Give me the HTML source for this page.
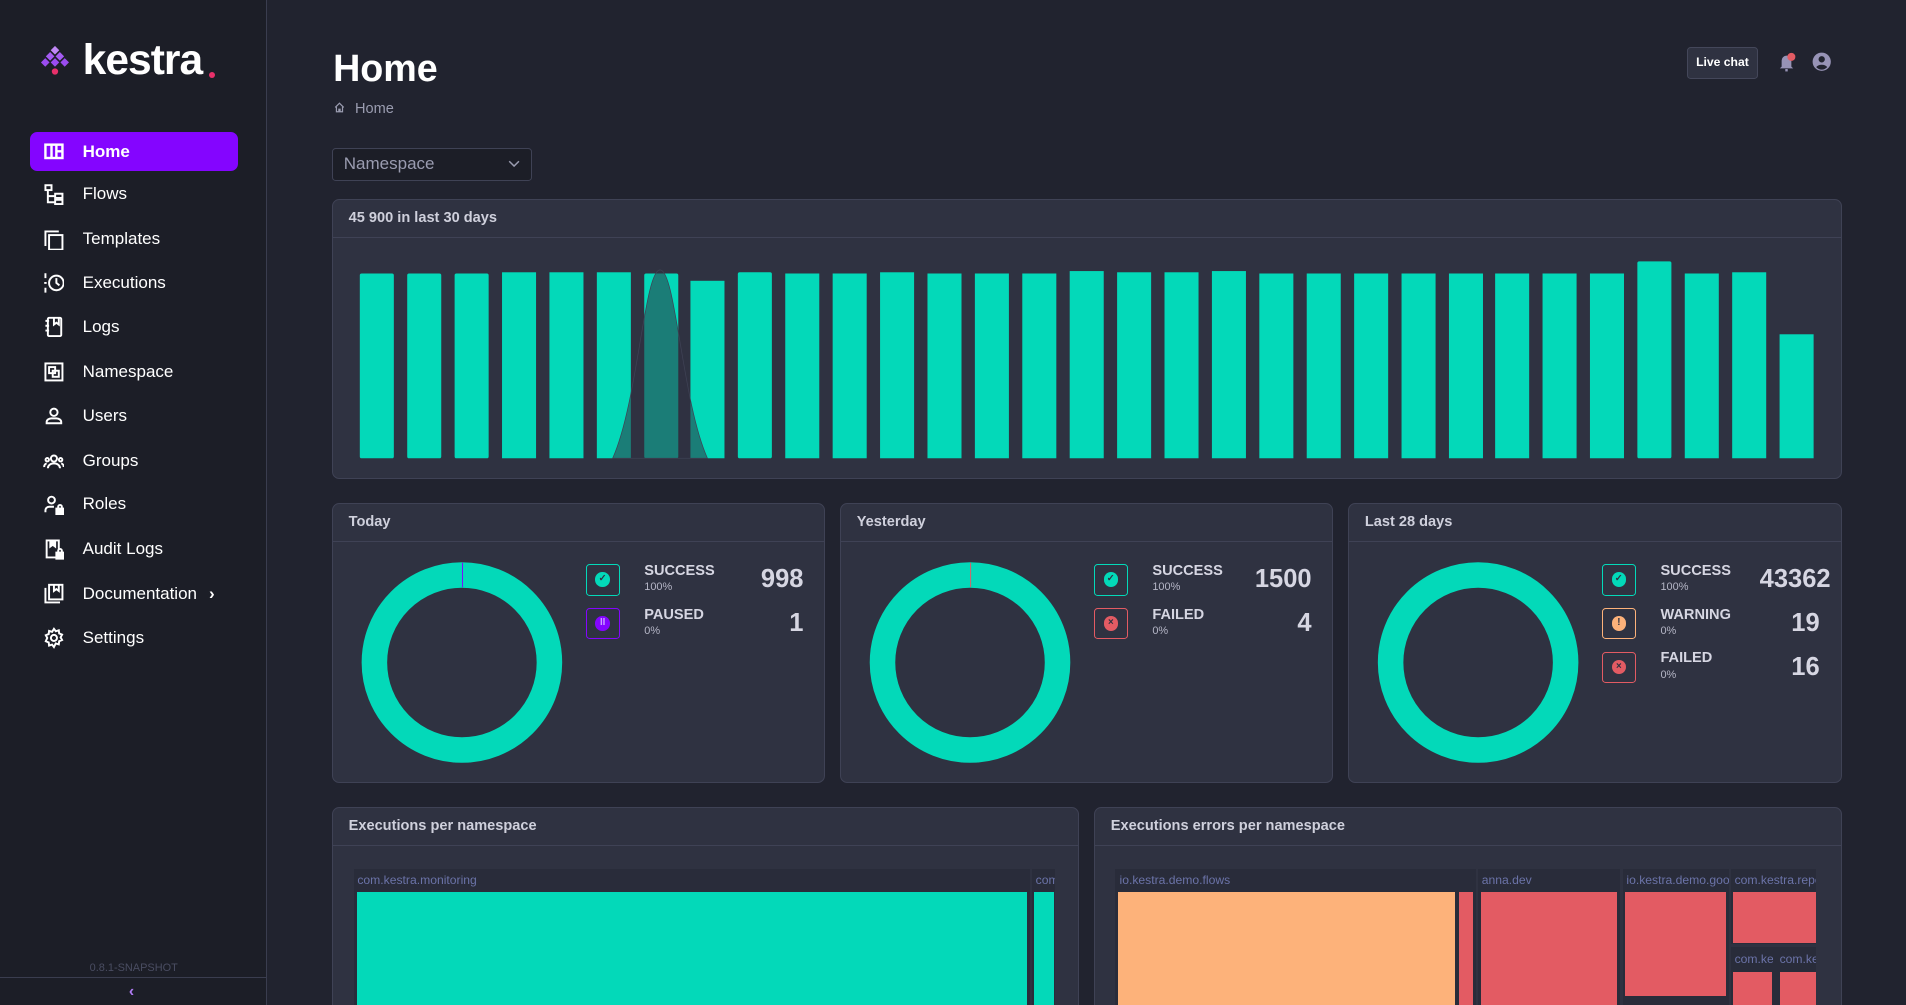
<!DOCTYPE html>
<html><head><meta charset="utf-8"><style>
html{zoom:1.21556;background:#21232f}
*{box-sizing:border-box;margin:0;padding:0}
body{width:1568px;height:827px;overflow:hidden;background:#21232f;font-family:"Liberation Sans",sans-serif;color:#fff}
#w{position:relative;width:1568px;height:827px;overflow:hidden}
.a{position:absolute}
.side{left:0;top:0;width:220px;height:827px;background:#1c1e27;border-right:1px solid #3a3d4f}
.nav{left:25px;width:171px;height:32px;font-size:14px;color:#fff;display:flex;align-items:center}
.nav svg{position:absolute;left:10px;width:18px;height:18px}
.nav span{position:absolute;left:43px}
.card{background:#2f3241;border:1px solid #3f4255;border-radius:6px}
.ch{height:31px;border-bottom:1px solid #3f4255;font-size:12px;font-weight:bold;color:#cfd0dc;padding:8px 0 0 13px}
.lg{width:28px;height:26px;border:1px solid;border-radius:3px}
.lg i{position:absolute;left:7px;top:6px;width:12px;height:12px;border-radius:50%;font-style:normal;font-size:8px;font-weight:bold;color:#2f3241;text-align:center;line-height:12px}
.lt{font-size:12px;font-weight:bold;color:#d6d6e2}
.lp{font-size:9px;color:#b5b6c6}
.num{font-size:21px;font-weight:bold;color:#d6d6e2;text-align:right;width:80px}
.tl{font-size:10px;color:#6b73a8}
</style></head><body><div id="w">
<div class="a side"></div>
<svg class="a" style="left:34px;top:38px" width="28" height="26" viewBox="0 0 28 26">
<rect x="9" y="1" width="5" height="5" fill="#c087f5" transform="rotate(45 11.5 3.5)"/>
<rect x="5" y="6" width="5" height="5" fill="#a45bf2" transform="rotate(45 7.5 8.5)"/>
<rect x="13" y="6" width="5" height="5" fill="#a45bf2" transform="rotate(45 15.5 8.5)"/>
<rect x="1" y="11" width="5" height="5" fill="#9b4cf0" transform="rotate(45 3.5 13.5)"/>
<rect x="9" y="11" width="5" height="5" fill="#9b4cf0" transform="rotate(45 11.5 13.5)"/>
<rect x="17" y="11" width="5" height="5" fill="#9b4cf0" transform="rotate(45 19.5 13.5)"/>
<circle cx="11.5" cy="21" r="2.6" fill="#e8306a"/></svg>
<div class="a" style="left:68px;top:30px;font-size:35px;font-weight:bold;letter-spacing:-0.8px;color:#fff">kestra</div>
<div class="a" style="left:172px;top:59px;width:5px;height:5px;border-radius:50%;background:#e8306a"></div>

<div class="a nav" style="top:109px;background:#8405ff;border-radius:6px;font-weight:bold"><svg viewBox="0 0 18 18" fill="none" stroke="#fff" stroke-width="2"><rect x="2" y="3" width="14" height="11"/><path d="M7 3v11M11 3v11M11 8.5h5"/></svg><span>Home</span></div>
<div class="a nav" style="top:144px"><svg viewBox="0 0 18 18" fill="none" stroke="#fff" stroke-width="1.6"><rect x="2" y="1" width="5" height="4"/><rect x="10" y="8" width="6" height="3.5"/><rect x="10" y="13" width="6" height="3.5"/><path d="M4 5v10h6M4 10h6"/></svg><span>Flows</span></div>
<div class="a nav" style="top:181px"><svg viewBox="0 0 18 18" fill="none" stroke="#fff" stroke-width="1.6"><rect x="5" y="5" width="11" height="12"/><path d="M2 14V2h11"/></svg><span>Templates</span></div>
<div class="a nav" style="top:217px"><svg viewBox="0 0 18 18" fill="none" stroke="#fff" stroke-width="1.6"><circle cx="11" cy="9" r="6"/><path d="M11 5v4l2.5 2M2 1v4M2 13v4M1 9h2"/></svg><span>Executions</span></div>
<div class="a nav" style="top:253px"><svg viewBox="0 0 18 18" fill="none" stroke="#fff" stroke-width="1.6"><rect x="4" y="1.5" width="11" height="15" rx="1"/><path d="M2 4h3M2 8h3M2 12h3M9 2v5l2-1.5 2 1.5V2" /></svg><span>Logs</span></div>
<div class="a nav" style="top:290px"><svg viewBox="0 0 18 18" fill="none" stroke="#fff" stroke-width="1.6"><rect x="2" y="2" width="14" height="14"/><rect x="5" y="5" width="5" height="5"/><rect x="8" y="8" width="5" height="5"/></svg><span>Namespace</span></div>
<div class="a nav" style="top:326px"><svg viewBox="0 0 18 18" fill="none" stroke="#fff" stroke-width="1.6"><circle cx="9" cy="6" r="3"/><path d="M3 15v-1a4 3 0 0 1 4-3h4a4 3 0 0 1 4 3v1z"/></svg><span>Users</span></div>
<div class="a nav" style="top:363px"><svg viewBox="0 0 18 18" fill="none" stroke="#fff" stroke-width="1.6"><circle cx="9" cy="7" r="2.5"/><circle cx="3.5" cy="8" r="1.4"/><circle cx="14.5" cy="8" r="1.4"/><path d="M4 15a5 4 0 0 1 10 0M1 14a3 3 0 0 1 2-3M17 14a3 3 0 0 0-2-3"/></svg><span>Groups</span></div>
<div class="a nav" style="top:399px"><svg viewBox="0 0 18 18" fill="none" stroke="#fff" stroke-width="1.6"><circle cx="7" cy="5" r="2.8"/><path d="M2 15v-1.5a3 3 0 0 1 3-3h4"/><rect x="11" y="12" width="6" height="5" fill="#fff"/><path d="M12.5 12v-1.5a1.5 1.5 0 0 1 3 0V12"/></svg><span>Roles</span></div>
<div class="a nav" style="top:436px"><svg viewBox="0 0 18 18" fill="none" stroke="#fff" stroke-width="1.6"><path d="M11 16H3V2h10v7"/><path d="M6 2v5l2-1.5 2 1.5V2" fill="#fff"/><rect x="11" y="12" width="6" height="5" fill="#fff"/><path d="M12.5 12v-1.5a1.5 1.5 0 0 1 3 0V12"/></svg><span>Audit Logs</span></div>
<div class="a nav" style="top:473px"><svg viewBox="0 0 18 18" fill="none" stroke="#fff" stroke-width="1.6"><rect x="5" y="1.5" width="11" height="12"/><path d="M2 4v12h12M9 1.5v5l2-1.5 2 1.5v-5" /></svg><span>Documentation</span><span style="left:147px;font-weight:bold">›</span></div>
<div class="a nav" style="top:509px"><svg viewBox="0 0 18 18" fill="none" stroke="#fff" stroke-width="1.6"><circle cx="9" cy="9" r="2.5"/><path d="M9 1.5l1.5 2 2.5-.8.3 2.6 2.4 1-1.2 2.2 1.2 2.2-2.4 1-.3 2.6-2.5-.8L9 16.5l-1.5-2-2.5.8-.3-2.6-2.4-1L3.5 9 2.3 6.8l2.4-1L5 3.2l2.5.8z"/></svg><span>Settings</span></div>

<div class="a" style="left:0;top:791px;width:220px;text-align:center;font-size:9px;color:#4a4d62">0.8.1-SNAPSHOT</div>
<div class="a" style="left:0;top:804px;width:220px;border-top:1px solid #3a3d4f"></div>
<div class="a" style="left:106px;top:809px;font-size:13px;color:#b07cf5;font-weight:bold">‹</div>

<div class="a" style="left:274px;top:39px;font-size:31px;font-weight:bold">Home</div>
<svg class="a" style="left:275px;top:84px" width="9" height="9" viewBox="0 0 9 9" fill="none" stroke="#9a9cb0" stroke-width="1"><path d="M1 4.5L4.5 1 8 4.5M2 4v4h2V6h1v2h2V4"/></svg>
<div class="a" style="left:292px;top:83px;font-size:12px;color:#9a9cb0">Home</div>
<div class="a" style="left:1388px;top:39px;width:58px;height:26px;background:#2f3241;border:1px solid #44475a;border-radius:3px;font-size:10px;font-weight:bold;text-align:center;line-height:24px">Live chat</div>
<svg class="a" style="left:1463px;top:43px" width="16" height="17" viewBox="0 0 16 17"><path d="M3 12V7a4 4 0 0 1 8 0v5l1.5 1.5h-11z" fill="#9793b6"/><rect x="6" y="14" width="2" height="2" fill="#9793b6"/><circle cx="11" cy="4" r="3.3" fill="#e35b63"/></svg>
<svg class="a" style="left:1491px;top:43px" width="16" height="16" viewBox="0 0 16 16"><circle cx="8" cy="8" r="7.5" fill="#9793b6"/><circle cx="8" cy="6" r="2.6" fill="#21232f"/><path d="M3.5 12.5a5 3.5 0 0 1 9 0a6 6 0 0 1-9 0z" fill="#21232f"/></svg>

<div class="a" style="left:273px;top:122px;width:165px;height:27px;background:#1c1e27;border:1px solid #3f4255;border-radius:3px;font-size:14px;color:#9a9cb0;padding:4px 0 0 9px">Namespace</div>
<svg class="a" style="left:418px;top:132px" width="10" height="6" viewBox="0 0 10 6" fill="none" stroke="#9a9cb0" stroke-width="1.2"><path d="M1 1l4 4 4-4"/></svg>

<div class="a card" style="left:273px;top:164px;width:1242px;height:230px"><div class="ch">45 900 in last 30 days</div></div>
<div class="a card" style="left:273px;top:414px;width:406px;height:230px"><div class="ch">Today</div></div>
<div class="a card" style="left:691px;top:414px;width:406px;height:230px"><div class="ch">Yesterday</div></div>
<div class="a card" style="left:1109px;top:414px;width:406px;height:230px"><div class="ch">Last 28 days</div></div>

<svg class="a" style="left:0;top:0" width="1568" height="827">
<g fill="#03d9b9">
<rect x="296" y="225" width="28" height="152" rx="1.5"/><rect x="335" y="225" width="28" height="152" rx="1.5"/><rect x="374" y="225" width="28" height="152" rx="1.5"/><rect x="413" y="224" width="28" height="153"/><rect x="452" y="224" width="28" height="153"/><rect x="491" y="224" width="28" height="153"/><rect x="530" y="225" width="28" height="152" rx="1.5"/><rect x="568" y="231" width="28" height="146"/><rect x="607" y="224" width="28" height="153" rx="1.5"/><rect x="646" y="225" width="28" height="152"/><rect x="685" y="225" width="28" height="152"/><rect x="724" y="224" width="28" height="153"/><rect x="763" y="225" width="28" height="152"/><rect x="802" y="225" width="28" height="152"/><rect x="841" y="225" width="28" height="152"/><rect x="880" y="223" width="28" height="154"/><rect x="919" y="224" width="28" height="153"/><rect x="958" y="224" width="28" height="153"/><rect x="997" y="223" width="28" height="154"/><rect x="1036" y="225" width="28" height="152"/><rect x="1075" y="225" width="28" height="152"/><rect x="1114" y="225" width="28" height="152"/><rect x="1153" y="225" width="28" height="152"/><rect x="1192" y="225" width="28" height="152"/><rect x="1230" y="225" width="28" height="152"/><rect x="1269" y="225" width="28" height="152"/><rect x="1308" y="225" width="28" height="152"/><rect x="1347" y="215" width="28" height="162" rx="1.5"/><rect x="1386" y="225" width="28" height="152"/><rect x="1425" y="224" width="28" height="153"/><rect x="1464" y="275" width="28" height="102"/>
</g>
<path d="M504 377C525 330 530 222 543 222C556 222 561 330 582 377Z" fill="#2f3241" fill-opacity="0.55" stroke="#3f4255" stroke-width="0.6"/>
<g fill="none" stroke="#03d9b9" stroke-width="21"><circle cx="380" cy="545" r="72"/><circle cx="798" cy="545" r="72"/><circle cx="1216" cy="545" r="72"/></g>
<line x1="380.5" y1="463" x2="380.5" y2="483" stroke="#8405ff" stroke-width="0.8"/>
<line x1="798.5" y1="463" x2="798.5" y2="483" stroke="#e35b63" stroke-width="0.8"/>
</svg>

<div class="a lg" style="left:482px;top:464px;border-color:#03d9b9"><i style="background:#03d9b9">✓</i></div>
<div class="a lt" style="left:530px;top:463px">SUCCESS</div><div class="a lp" style="left:530px;top:478px">100%</div>
<div class="a num" style="left:581px;top:465px">998</div>
<div class="a lg" style="left:482px;top:500px;border-color:#8405ff"><i style="background:#8405ff;color:#c9a0ff">II</i></div>
<div class="a lt" style="left:530px;top:499px">PAUSED</div><div class="a lp" style="left:530px;top:514px">0%</div>
<div class="a num" style="left:581px;top:501px">1</div>

<div class="a lg" style="left:900px;top:464px;border-color:#03d9b9"><i style="background:#03d9b9">✓</i></div>
<div class="a lt" style="left:948px;top:463px">SUCCESS</div><div class="a lp" style="left:948px;top:478px">100%</div>
<div class="a num" style="left:999px;top:465px">1500</div>
<div class="a lg" style="left:900px;top:500px;border-color:#e35b63"><i style="background:#e35b63">×</i></div>
<div class="a lt" style="left:948px;top:499px">FAILED</div><div class="a lp" style="left:948px;top:514px">0%</div>
<div class="a num" style="left:999px;top:501px">4</div>

<div class="a lg" style="left:1318px;top:464px;border-color:#03d9b9"><i style="background:#03d9b9">✓</i></div>
<div class="a lt" style="left:1366px;top:463px">SUCCESS</div><div class="a lp" style="left:1366px;top:478px">100%</div>
<div class="a num" style="left:1426px;top:465px">43362</div>
<div class="a lg" style="left:1318px;top:500px;border-color:#fdb27a"><i style="background:#fdb27a">!</i></div>
<div class="a lt" style="left:1366px;top:499px">WARNING</div><div class="a lp" style="left:1366px;top:514px">0%</div>
<div class="a num" style="left:1417px;top:501px">19</div>
<div class="a lg" style="left:1318px;top:536px;border-color:#e35b63"><i style="background:#e35b63">×</i></div>
<div class="a lt" style="left:1366px;top:535px">FAILED</div><div class="a lp" style="left:1366px;top:550px">0%</div>
<div class="a num" style="left:1417px;top:537px">16</div>

<div class="a card" style="left:273px;top:664px;width:615px;height:200px"><div class="ch">Executions per namespace</div></div>
<div class="a card" style="left:900px;top:664px;width:615px;height:200px"><div class="ch">Executions errors per namespace</div></div>

<div class="a" style="left:291px;top:715px;width:577px;height:120px;background:#292c3a"></div>
<div class="a" style="left:847px;top:715px;width:2px;height:120px;background:#2f3241"></div>
<div class="a tl" style="left:294px;top:718px">com.kestra.monitoring</div>
<div class="a tl" style="left:852px;top:718px;width:16px;overflow:hidden">com</div>
<div class="a" style="left:294px;top:734px;width:551px;height:100px;background:#03d9b9"></div>
<div class="a" style="left:851px;top:734px;width:16px;height:100px;background:#03d9b9"></div>

<div class="a" style="left:917px;top:715px;width:577px;height:120px;background:#292c3a"></div>
<div class="a tl" style="left:921px;top:718px">io.kestra.demo.flows</div>
<div class="a" style="left:920px;top:734px;width:277px;height:100px;background:#fdb27a"></div>
<div class="a" style="left:1200px;top:734px;width:12px;height:100px;background:#e35b63"></div>
<div class="a" style="left:1214px;top:715px;width:2px;height:120px;background:#2f3241"></div>
<div class="a tl" style="left:1219px;top:718px">anna.dev</div>
<div class="a" style="left:1218px;top:734px;width:112px;height:100px;background:#e35b63"></div>
<div class="a" style="left:1333px;top:715px;width:2px;height:120px;background:#2f3241"></div>
<div class="a tl" style="left:1338px;top:718px;width:84px;overflow:hidden;white-space:nowrap">io.kestra.demo.google</div>
<div class="a" style="left:1337px;top:734px;width:83px;height:85px;background:#e35b63"></div>
<div class="a" style="left:1422px;top:715px;width:2px;height:120px;background:#2f3241"></div>
<div class="a tl" style="left:1427px;top:718px;width:67px;overflow:hidden;white-space:nowrap">com.kestra.repo</div>
<div class="a" style="left:1426px;top:734px;width:68px;height:42px;background:#e35b63"></div>
<div class="a" style="left:1424px;top:777px;width:70px;height:2px;background:#2f3241"></div>
<div class="a tl" style="left:1427px;top:783px;width:32px;overflow:hidden;white-space:nowrap">com.ke</div>
<div class="a tl" style="left:1464px;top:783px;width:30px;overflow:hidden;white-space:nowrap">com.ke</div>
<div class="a" style="left:1426px;top:800px;width:32px;height:35px;background:#e35b63"></div>
<div class="a" style="left:1464px;top:800px;width:30px;height:35px;background:#e35b63"></div>
</div></body></html>
